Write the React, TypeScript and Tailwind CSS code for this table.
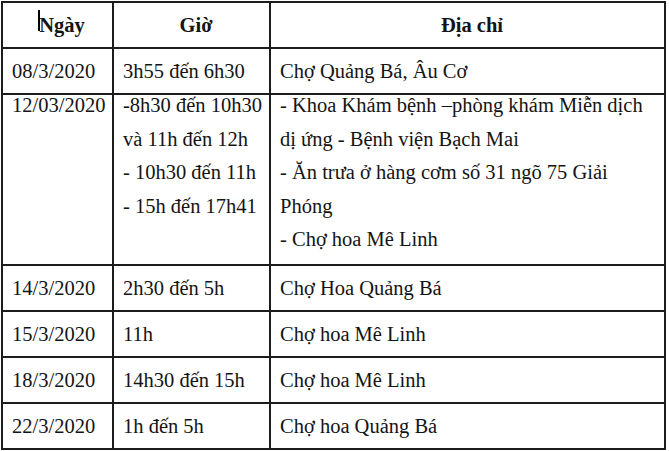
import React from "react";

type Row = {
  date: string;
  time: string[];
  place: string[][];
  h: string;
};

const rows: Row[] = [
  { date: "08/3/2020", time: ["3h55 đến 6h30"], place: [["Chợ Quảng Bá, Âu Cơ"]], h: "h-[46px]" },
  {
    date: "12/03/2020",
    time: ["-8h30 đến 10h30", "và 11h đến 12h", "- 10h30 đến 11h", "- 15h đến 17h41"],
    place: [
      ["- Khoa Khám bệnh –phòng khám Miễn dịch", "dị ứng - Bệnh viện Bạch Mai"],
      ["- Ăn trưa ở hàng cơm số 31 ngõ 75 Giải", "Phóng"],
      ["- Chợ hoa Mê Linh"],
    ],
    h: "h-[171px]",
  },
  { date: "14/3/2020", time: ["2h30 đến 5h"], place: [["Chợ Hoa Quảng Bá"]], h: "h-[46px]" },
  { date: "15/3/2020", time: ["11h"], place: [["Chợ hoa Mê Linh"]], h: "h-[46px]" },
  { date: "18/3/2020", time: ["14h30 đến 15h"], place: [["Chợ hoa Mê Linh"]], h: "h-[46px]" },
  { date: "22/3/2020", time: ["1h đến 5h"], place: [["Chợ hoa Quảng Bá"]], h: "h-[46px]" },
];

const cell = "border-r-2 border-b-2 border-[#1c1c1c] pl-[9px]";

export default function App() {
  return (
    <div className="w-[669px] h-[451px] bg-white overflow-hidden font-serif text-[20.5px] text-[#141414]">
      <div className="ml-px mt-px w-[665px] border-l-2 border-t-2 border-[#1c1c1c] grid grid-cols-[111px_157px_395px] font-[Liberation_Serif]">
        {/* header */}
        <div className={`${cell} pl-0 h-[46px] flex items-center justify-center font-bold`}>
          <span className="relative">
            <span className="absolute -left-[1px] top-[0px] h-[21px] w-[2px] bg-black" />
            Ngày
          </span>
        </div>
        <div className={`${cell} pl-0 h-[46px] flex items-center justify-center font-bold`}>Giờ</div>
        <div className={`${cell} pl-0 h-[46px] flex items-center justify-center font-bold`}>Địa chỉ</div>

        {rows.map((r) =>
          r.time.length > 1 ? (
            <React.Fragment key={r.date}>
              <div className={`${cell} ${r.h} leading-[33.6px]`}>
                <div className="-mt-[6px]">{r.date}</div>
              </div>
              <div className={`${cell} ${r.h} leading-[33.6px] whitespace-nowrap`}>
                <div className="-mt-[6px]">
                  {r.time.map((t) => (
                    <div key={t}>{t}</div>
                  ))}
                </div>
              </div>
              <div className={`${cell} ${r.h} leading-[33.6px] whitespace-nowrap`}>
                <div className="-mt-[6px]">
                  {r.place.map((p, i) => (
                    <p key={i}>
                      {p.map((line) => (
                        <span key={line} className="block">
                          {line}
                        </span>
                      ))}
                    </p>
                  ))}
                </div>
              </div>
            </React.Fragment>
          ) : (
            <React.Fragment key={r.date}>
              <div className={`${cell} ${r.h} flex items-center`}>{r.date}</div>
              <div className={`${cell} ${r.h} flex items-center whitespace-nowrap`}>{r.time[0]}</div>
              <div className={`${cell} ${r.h} flex items-center whitespace-nowrap`}>{r.place[0][0]}</div>
            </React.Fragment>
          )
        )}
      </div>
    </div>
  );
}
